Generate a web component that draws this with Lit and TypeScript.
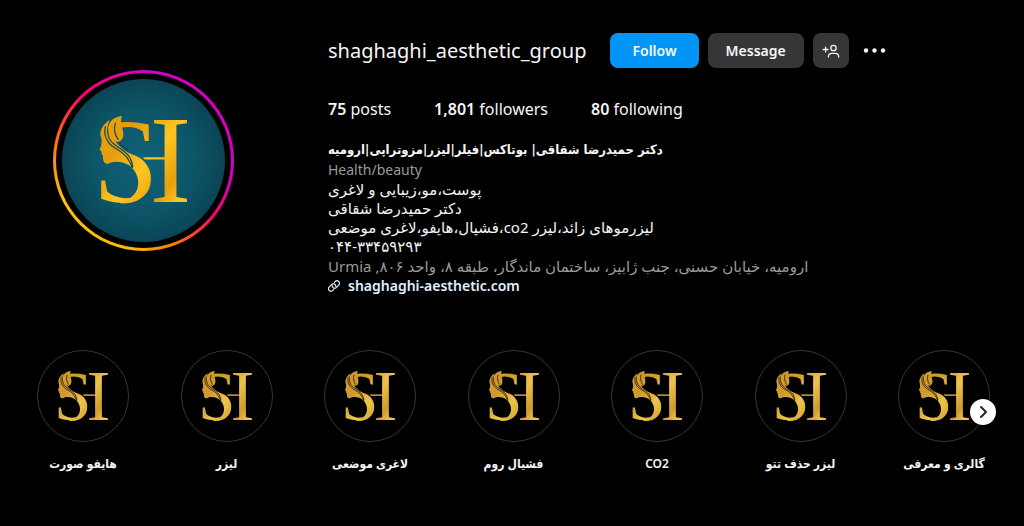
import { LitElement, html, css } from "lit";
import { customElement, property } from "lit/decorators.js";

const highlights = [
  "هایفو صورت",
  "لیزر",
  "لاغری موضعی",
  "فشیال روم",
  "CO2",
  "لیزر حذف تتو",
  "گالری و معرفی",
];

/* Gold monogram: serif initials with a woman's profile and flowing hair. */
@customElement("brand-mark")
class BrandMark extends LitElement {
  @property() tone = "bright";

  static styles = css`
    :host {
      display: block;
    }
    svg {
      display: block;
      width: 100%;
      height: auto;
      overflow: visible;
    }
    .initials {
      font-family: "Liberation Serif", serif;
      font-size: 376px;
      font-weight: 400;
    }
    .first {
      font-size: 362px;
    }
    .bright {
      --light: #fdc622;
      --deep: #e69f0c;
      --cut: #0c4655;
    }
    .soft {
      --light: #edc44a;
      --deep: #cf9a2e;
      --cut: #000;
    }
    .light {
      stop-color: var(--light);
    }
    .deep {
      stop-color: var(--deep);
    }
    .cut {
      fill: none;
      stroke: var(--cut);
      stroke-width: 3.5;
      stroke-linecap: round;
    }
  `;

  render() {
    return html`<svg class=${this.tone} viewBox="180 176 272 264" aria-hidden="true">
      <defs>
        <linearGradient id="gold" gradientUnits="userSpaceOnUse" x1="200" y1="200" x2="440" y2="400">
          <stop class="deep" offset="0" />
          <stop class="deep" offset="0.25" />
          <stop class="light" offset="0.55" />
          <stop class="deep" offset="0.85" />
          <stop class="light" offset="1" />
        </linearGradient>
        <clipPath id="tips">
          <path d="M246 170H345V272H290L246 226ZM170 345H276V445H170Z" />
        </clipPath>
      </defs>
      <g fill="url(#gold)">
        <text class="initials first" x="165" y="433" clip-path="url(#tips)">S</text>
        <text class="initials" x="334" y="433">I</text>
        <path d="M314 299H384V306H320Z" />
        <path
          d="M214 188C198 200 187 214 187 232L191 246L190 262L185 277L191 283L191 290L195 295L195 304Q197 320 210 319C228 308 256 312 274 324C296 342 304 366 299 388C293 412 274 428 246 430V437C290 441 326 420 336 384C342 352 336 330 314 308C298 294 280 292 264 282C240 266 220 244 220 206Z"
        />
      </g>
      <path
        class="cut"
        d="M216 190C204 216 206 244 230 262C256 280 280 292 284 328M202 208C194 240 214 264 238 276C260 288 274 304 282 330M222 200C218 230 236 252 268 278"
      />
      <path
        fill="url(#gold)"
        d="M252 176C230 178 212 190 210 212C214 232 222 248 240 254C256 250 258 234 254 218C250 202 246 190 252 176Z"
      />
      <path class="cut" d="M232 198C227 214 230 232 240 246" />
    </svg>`;
  }
}

@customElement("app-root")
class AppRoot extends LitElement {
  static styles = css`
    :host {
      display: block;
      min-height: 100vh;
      box-sizing: border-box;
      background: #000;
      color: #f5f5f5;
      font-family: "Noto Sans", "DejaVu Sans", sans-serif;
      font-size: 14px;
      line-height: 20px;
    }
    h1,
    h2,
    p,
    ul {
      margin: 0;
      padding: 0;
      font: inherit;
    }
    ul {
      list-style: none;
    }
    a {
      color: inherit;
      text-decoration: none;
    }
    button {
      border: 0;
      padding: 0;
      color: inherit;
      background: none;
      font: inherit;
      cursor: pointer;
    }
    svg {
      display: block;
    }
    .profile {
      display: grid;
      grid-template-columns: 181px minmax(0, 1fr);
      column-gap: 94px;
      padding: 33px 53px 0;
    }
    .avatar {
      display: grid;
      place-items: center;
      width: 181px;
      height: 181px;
      margin-top: 37px;
      border-radius: 50%;
      background: conic-gradient(
        #d300c5,
        #d300c5 28%,
        #ff0169 36%,
        #ff7a00 44%,
        #ffb800 52%,
        #ffc00c 68%,
        #ff7a00 78%,
        #ff0169 88%,
        #d300c5
      );
    }
    .gap {
      display: grid;
      place-items: center;
      width: 175px;
      height: 175px;
      border-radius: 50%;
      background: #000;
    }
    .photo {
      display: grid;
      place-items: center;
      width: 163px;
      height: 163px;
      border-radius: 50%;
      background: radial-gradient(circle, #10627a 0%, #0d5568 45%, #0a3f4e 80%, #08333f 100%);
    }
    .photo brand-mark {
      width: 91px;
    }
    .title {
      display: flex;
      align-items: flex-start;
      gap: 9px;
    }
    .title h1 {
      margin-right: 15px;
      font-size: 20px;
      line-height: 36px;
    }
    .button {
      height: 35px;
      padding: 0 18px;
      border-radius: 8px;
      background: #363636;
      font-weight: 600;
    }
    .follow {
      padding: 0 22px;
      background: #0095f6;
    }
    .suggest {
      padding: 0 9px;
    }
    .stats {
      display: flex;
      gap: 43px;
      margin-top: 30px;
      font-size: 16px;
    }
    b {
      font-weight: 600;
    }
    .bio {
      margin-top: 21px;
    }
    .rtl {
      direction: rtl;
      text-align: left;
    }
    .about,
    .address {
      font-size: 15px;
    }
    .about {
      line-height: 19px;
    }
    .name {
      font-family: "DejaVu Sans Condensed", "DejaVu Sans", sans-serif;
      font-size: 13px;
      font-weight: 700;
    }
    .muted {
      color: #9a9a9a;
    }
    .link {
      display: flex;
      align-items: center;
      gap: 8px;
      color: #e0f1ff;
      font-weight: 600;
    }
    .highlights {
      position: relative;
      margin-top: 54px;
      padding: 0 34px 0 37px;
    }
    .list {
      display: flex;
      justify-content: space-between;
    }
    .item {
      display: flex;
      flex-direction: column;
      align-items: center;
      gap: 12px;
      width: 92px;
      font-family: "Noto Sans", "DejaVu Sans Condensed", "DejaVu Sans", sans-serif;
      font-size: 12px;
      font-weight: 600;
      white-space: nowrap;
    }
    .cover {
      display: grid;
      place-items: center;
      box-sizing: border-box;
      width: 92px;
      height: 92px;
      border: 1px solid #363636;
      border-radius: 50%;
    }
    .cover brand-mark {
      width: 52px;
    }
    .next {
      position: absolute;
      top: 49px;
      right: 28px;
      display: grid;
      place-items: center;
      width: 26px;
      height: 26px;
      border-radius: 50%;
      background: #fff;
      color: #262626;
    }
  `;

  render() {
    return html`
      <header class="profile">
        <div class="avatar">
          <div class="gap"><div class="photo"><brand-mark></brand-mark></div></div>
        </div>
        <section>
          <div class="title">
            <h1>shaghaghi_aesthetic_group</h1>
            <button class="button follow">Follow</button>
            <button class="button">Message</button>
            <button class="button suggest" aria-label="Similar accounts">
              <svg width="18" height="18" viewBox="0 0 18 18" fill="none" stroke="#f5f5f5" stroke-width="1.3" stroke-linecap="round">
                <circle cx="11.5" cy="6" r="2.7" />
                <path d="M6.4 15V14.5A3.2 3.2 0 0 1 9.6 11.3H13.4A3.2 3.2 0 0 1 16.6 14.5V15M1.2 7.5H6M3.6 5.1V9.9" />
              </svg>
            </button>
            <button class="more" aria-label="Options">
              <svg width="34" height="35" viewBox="0 0 34 35" fill="#f5f5f5">
                <circle cx="8" cy="17.5" r="2.2" />
                <circle cx="16.5" cy="17.5" r="2.2" />
                <circle cx="25" cy="17.5" r="2.2" />
              </svg>
            </button>
          </div>
          <ul class="stats">
            <li><b>75</b> posts</li>
            <li><a href="#followers"><b>1,801</b> followers</a></li>
            <li><a href="#following"><b>80</b> following</a></li>
          </ul>
          <div class="bio">
            <h2 class="name rtl">دکتر حمیدرضا شقاقی| بوتاکس|فیلر|لیزر|مزوتراپی|ارومیه</h2>
            <p class="muted">Health/beauty</p>
            <div class="about">
              <p class="rtl">پوست،مو،زیبایی و لاغری</p>
              <p class="rtl">دکتر حمیدرضا شقاقی</p>
              <p class="rtl">لیزرموهای زائد،لیزر co2،فشیال،هایفو،لاغری موضعی</p>
              <p>۰۴۴-۳۳۴۵۹۲۹۳</p>
            </div>
            <p class="rtl muted address">ارومیه، خیابان حسنی، جنب ژابیز، ساختمان ماندگار، طبقه ۸، واحد ۸۰۶, Urmia</p>
            <a class="link" href="#website">
              <svg width="12" height="12" viewBox="0 0 12 12" fill="none" stroke="currentColor" stroke-width="1.2" stroke-linecap="round">
                <path d="M5.6 9.6L4.9 10.4A2.5 2.5 0 0 1 1.3 6.9L4.2 4A2.5 2.5 0 0 1 7.8 6.4" />
                <path d="M6.4 2.4L7.1 1.6A2.5 2.5 0 0 1 10.7 5.1L7.8 8A2.5 2.5 0 0 1 4.2 5.6" />
              </svg>
              shaghaghi-aesthetic.com
            </a>
          </div>
        </section>
      </header>
      <nav class="highlights" aria-label="Highlights">
        <ul class="list">
          ${highlights.map(
            (label) => html`<li>
              <a class="item" href="#highlight">
                <span class="cover"><brand-mark tone="soft"></brand-mark></span>
                <span>${label}</span>
              </a>
            </li>`
          )}
        </ul>
        <button class="next" aria-label="Next">
          <svg width="14" height="14" viewBox="0 0 14 14" fill="none" stroke="currentColor" stroke-width="2" stroke-linecap="round" stroke-linejoin="round">
            <path d="M5 2L10 7L5 12" />
          </svg>
        </button>
      </nav>
    `;
  }
}
